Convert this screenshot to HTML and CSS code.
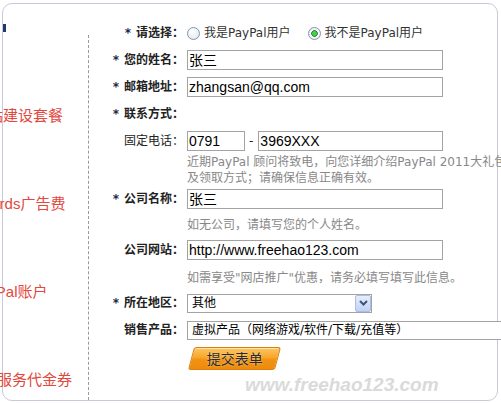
FILE: index.html
```html
<!DOCTYPE html>
<html lang="zh-CN">
<head>
<meta charset="utf-8">
<title>PayPal 表单</title>
<link rel="stylesheet" href="styles.css">
</head>
<body>
<div class="frame">
  <div class="side">
    <div class="mark"></div>
    <div class="promo promo-1">网站建设套餐</div>
    <div class="promo promo-2">AdWords广告费</div>
    <div class="promo promo-3">PayPal账户</div>
    <div class="promo promo-4">服务代金券</div>
  </div>
  <div class="divider"></div>
  <div class="form">
    <div class="row r1">
      <div class="lbl"><span class="req">*</span>请选择：</div>
      <label class="radio"><span class="dot"></span>我是PayPal用户</label>
      <label class="radio on"><span class="dot"></span>我不是PayPal用户</label>
    </div>
    <div class="row">
      <div class="lbl"><span class="req">*</span>您的姓名：</div>
      <div class="field w-full">张三</div>
    </div>
    <div class="row">
      <div class="lbl"><span class="req">*</span>邮箱地址：</div>
      <div class="field w-full">zhangsan@qq.com</div>
    </div>
    <div class="row">
      <div class="lbl"><span class="req">*</span>联系方式：</div>
    </div>
    <div class="row">
      <div class="lbl plain">固定电话：</div>
      <div class="field w-area">0791</div>
      <span class="dash">-</span>
      <div class="field w-num">3969XXX</div>
    </div>
    <div class="help help-1">近期PayPal 顾问将致电，向您详细介绍PayPal 2011大礼包<br>及领取方式；请确保信息正确有效。</div>
    <div class="row">
      <div class="lbl"><span class="req">*</span>公司名称：</div>
      <div class="field w-full">张三</div>
    </div>
    <div class="help help-2">如无公司，请填写您的个人姓名。</div>
    <div class="row">
      <div class="lbl">公司网站：</div>
      <div class="field w-full">http://www.freehao123.com</div>
    </div>
    <div class="help help-3">如需享受&quot;网店推广&quot;优惠，请务必填写填写此信息。</div>
    <div class="row">
      <div class="lbl"><span class="req">*</span>所在地区：</div>
      <div class="select sel-region">
        <span>其他</span>
        <span class="arrow"><svg width="9" height="6" viewBox="0 0 9 6"><path d="M1 1 L4.5 4.5 L8 1" fill="none" stroke="#3f5277" stroke-width="2"/></svg></span>
      </div>
    </div>
    <div class="row">
      <div class="lbl">销售产品：</div>
      <div class="select sel-product">虚拟产品（网络游戏/软件/下载/充值等）</div>
    </div>
    <div class="btn-row">
      <div class="btn"><span class="btn-text">提交表单</span></div>
    </div>
    <div class="wm">www.freehao123.com</div>
  </div>
</div>
</body>
</html>
```
FILE: styles.css
```css
* { box-sizing: border-box; }
html, body { margin: 0; padding: 0; }
body {
  width: 501px;
  height: 403px;
  overflow: hidden;
  background: #fff;
  font: 12px/16px "DejaVu Sans", "Noto Sans CJK SC", sans-serif;
  color: #222;
}
.frame {
  margin: 3px 0 0 2px;
  width: 496px;
  height: 398px;
  border: 1px solid #c9c9db;
  border-radius: 10px;
  display: flex;
}
.side { width: 85px; flex: none; }
.mark { width: 3px; height: 8px; background: #1e3a68; margin-top: 20px; }
.promo {
  height: 88px;
  line-height: 88px;
  white-space: nowrap;
  color: #e2483d;
  font: 15px/88px "Liberation Sans", "Noto Sans CJK SC", sans-serif;
}
.promo-1 { margin-top: 40px; margin-left: -30px; }
.promo-2 { margin-left: -44px; }
.promo-3 { margin-left: -33px; }
.promo-4 { margin-left: -6px; }
.divider { width: 0; flex: none; border-left: 1px dashed #999; margin-top: 31px; }
.form { flex: 1; padding-top: 19px; min-width: 0; }
.row {
  display: flex;
  align-items: center;
  height: 20px;
  margin-top: 7px;
  white-space: nowrap;
}
.r1 { margin-top: 0; }
.lbl {
  width: 95px;
  flex: none;
  text-align: right;
  font-weight: bold;
  margin-right: 3px;
  color: #222;
}
.lbl.plain { font-weight: normal; }
.req { margin-right: 5px; color: #1c2a48; }
.radio { display: flex; align-items: center; margin-right: 17px; color: #333; }
.dot {
  width: 13px;
  height: 13px;
  border-radius: 50%;
  border: 1px solid #8394b0;
  background: radial-gradient(circle at 40% 35%, #fff, #dde3ea);
  margin-right: 4px;
}
.on .dot {
  background: radial-gradient(circle, #4ccf4c 0 2px, #2a8a3a 2.6px 3px, #fbfbfb 3.6px, #e0e4ea 100%);
}
.field {
  height: 20px;
  border: 1px solid #a3a3a3;
  padding: 0 1px;
  font: 14px/18px "Liberation Sans", "Noto Sans CJK SC", sans-serif;
  color: #000;
  background: #fff;
  overflow: hidden;
}
.w-full { width: 256px; }
.w-area { width: 58px; }
.w-num { width: 185px; }
.dash { margin: 0 5px 0 4px; }
.select {
  height: 19px;
  border: 1px solid #a3a3a3;
  display: flex;
  align-items: center;
  padding-left: 4px;
  background: #fff;
  color: #000;
}
.sel-region { width: 185px; justify-content: space-between; padding-right: 0; }
.sel-product { width: 340px; flex: none; }
.arrow {
  width: 16px;
  height: 17px;
  border: 1px solid #a9bde6;
  border-radius: 2px;
  background: linear-gradient(#e6eefd, #bfd1f6);
  display: flex;
  align-items: center;
  justify-content: center;
}
.help { margin-left: 98px; color: #888; line-height: 16px; white-space: nowrap; }
.help-1 { margin-top: 3px; margin-bottom: -4px; }
.help-2 { margin-top: 8px; margin-bottom: 2px; }
.help-3 { margin-top: 10px; margin-bottom: 1px; }
.btn-row { margin: 7px 0 0 102px; }
.btn {
  width: 87px;
  height: 23px;
  transform: skewX(-15deg);
  border: 1px solid #dc7d0c;
  border-radius: 3px;
  background: linear-gradient(#fcc662 0%, #f8a62a 45%, #f29314 55%, #ee8a0c 100%);
  box-shadow: inset 0 1px 0 rgba(255,255,255,0.5);
  display: flex;
  align-items: center;
  justify-content: center;
}
.btn-text {
  transform: skewX(15deg);
  font-size: 14px;
  color: #2b2b2b;
  text-shadow: 0 0 2px rgba(255,235,190,0.8);
}
.wm {
  margin: 4px 0 0 156px;
  font: italic bold 19px/22px "Liberation Sans", sans-serif;
  color: #dadada;
  white-space: nowrap;
}
```
